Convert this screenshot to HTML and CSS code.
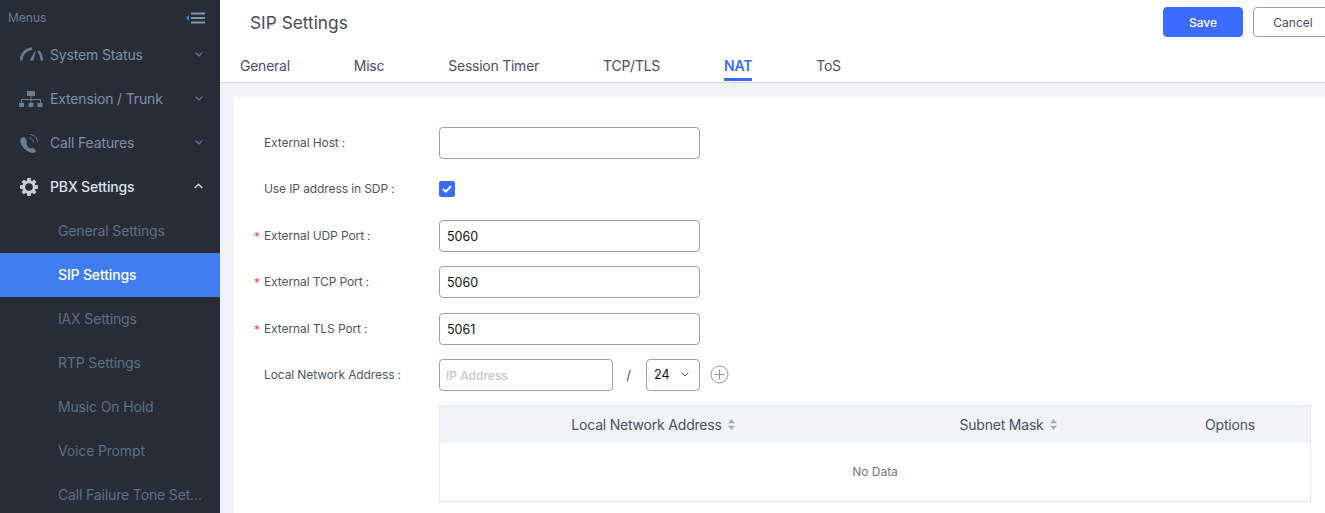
FILE: index.html
```html
<!DOCTYPE html>
<html lang="en">
<head>
<meta charset="utf-8">
<title>SIP Settings</title>
<link rel="stylesheet" href="styles.css">
</head>
<body>
<div class="app">
  <aside class="sidebar">
    <div class="menus-head">
      <span>Menus</span>
      <svg class="collapse" width="20" height="12" viewBox="0 0 20 12"><path d="M0 6l3-3v6z" fill="#3f7df0"/><path d="M5 1.500h14M5 6h14M5 10.500h14" stroke="#8593a8" stroke-width="2"/></svg>
    </div>
    <div class="nav-item">
      <svg class="nav-icon" width="24" height="16" viewBox="0 0 24 16" fill="none" stroke="#6b7b92"><path d="M2.200 13.500C2 8 6 2.500 13 1.500" stroke-width="2.600"/><path d="M19.500 4C21.500 6.500 22.800 9.500 22.800 13.500" stroke-width="2.600"/><path d="M10.500 13.500L17 2.500 14.500 13.500z" fill="#6b7b92" stroke="none"/></svg>
      <span class="nav-label">System Status</span>
      <svg class="chev" width="8" height="5" viewBox="0 0 8 5"><path d="M.7.7L4 4l3.300-3.300" fill="none" stroke="#6b7b92" stroke-width="1.100"/></svg>
    </div>
    <div class="nav-item">
      <svg class="nav-icon" width="24" height="17" viewBox="0 0 24 17" fill="#6b7b92"><path d="M8 0h8v5H8zM0 12h5v4H0zM9.500 12h5v4h-5zM18.500 12h5v4h-5z"/><path d="M12 5v7M2.500 12V8.500h19V12" fill="none" stroke="#6b7b92"/></svg>
      <span class="nav-label">Extension / Trunk</span>
      <svg class="chev" width="8" height="5" viewBox="0 0 8 5"><path d="M.7.7L4 4l3.300-3.300" fill="none" stroke="#6b7b92" stroke-width="1.100"/></svg>
    </div>
    <div class="nav-item">
      <svg class="nav-icon" width="24" height="21" viewBox="0 0 24 21" fill="none"><path d="M2 5.500C.5 7 1 10 3.500 13.500S10 19.500 13 20c2 .3 4-1 4-2.500l-3.500-3-2 1.200C10 15 8 13.200 7.500 11.500c-.4-1 0-2 .8-2.500L6 4.500C4.500 4 3 4.500 2 5.500z" fill="#6b7b92"/><path d="M10 5c2.500 0 4.500 2 4.500 4.500M11 1.500c4 0 7.500 3.500 7.500 7.500" stroke="#6b7b92" stroke-width="1"/></svg>
      <span class="nav-label">Call Features</span>
      <svg class="chev" width="8" height="5" viewBox="0 0 8 5"><path d="M.7.7L4 4l3.300-3.300" fill="none" stroke="#6b7b92" stroke-width="1.100"/></svg>
    </div>
    <div class="nav-item open">
      <svg class="nav-icon gear" width="24" height="18" viewBox="0 0 24 18"><circle cx="9" cy="9" r="5.300" fill="none" stroke="#c9ced6" stroke-width="3"/><path d="M7.300 0h3.400l.4 3H6.900zM7.300 18h3.400l.4-3H6.900zM0 7.300v3.400l3 .4V6.900zM18 7.300v3.400l-3 .4V6.900zM1.500 4L4 1.500l2.200 2.200-2.500 2.500zM16.500 14L14 16.500l-2.200-2.200 2.500-2.500zM14 1.500L16.500 4l-2.200 2.200-2.500-2.500zM4 16.500L1.500 14l2.200-2.200 2.500 2.500z" fill="#c9ced6"/></svg>
      <span class="nav-label">PBX Settings</span>
      <svg class="chev" width="9" height="6" viewBox="0 0 9 6"><path d="M.8 5L4.500 1.300 8.200 5" fill="none" stroke="#d5d9df" stroke-width="1.400"/></svg>
    </div>
    <div class="sub-item">General Settings</div>
    <div class="sub-item active">SIP Settings</div>
    <div class="sub-item">IAX Settings</div>
    <div class="sub-item">RTP Settings</div>
    <div class="sub-item">Music On Hold</div>
    <div class="sub-item">Voice Prompt</div>
    <div class="sub-item">Call Failure Tone Settings</div>
  </aside>
  <main class="main">
    <header class="header">
      <div class="title-row">
        <h1 class="title">SIP Settings</h1>
        <div class="actions">
          <button class="btn primary">Save</button>
          <button class="btn ghost">Cancel</button>
        </div>
      </div>
      <nav class="tabs">
        <span class="tab">General</span>
        <span class="tab">Misc</span>
        <span class="tab">Session Timer</span>
        <span class="tab">TCP/TLS</span>
        <span class="tab current">NAT</span>
        <span class="tab">ToS</span>
      </nav>
    </header>
    <section class="content">
      <div class="card">
        <div class="row">
          <label class="label">External Host<i>:</i></label>
          <div class="input"></div>
        </div>
        <div class="row">
          <label class="label">Use IP address in SDP<i>:</i></label>
          <span class="checkbox"><svg width="10" height="8" viewBox="0 0 10 8"><path d="M1 4l2.700 2.600L9 1.200" fill="none" stroke="#fff" stroke-width="2"/></svg></span>
        </div>
        <div class="row">
          <label class="label req">External UDP Port<i>:</i></label>
          <div class="input">5060</div>
        </div>
        <div class="row">
          <label class="label req">External TCP Port<i>:</i></label>
          <div class="input">5060</div>
        </div>
        <div class="row">
          <label class="label req">External TLS Port<i>:</i></label>
          <div class="input">5061</div>
        </div>
        <div class="row">
          <label class="label">Local Network Address<i>:</i></label>
          <div class="input ip">IP Address</div>
          <span class="slash">/</span>
          <div class="input mask">24<svg width="8" height="5" viewBox="0 0 8 5"><path d="M.7.7L4 4l3.300-3.300" fill="none" stroke="#555" stroke-width="1"/></svg></div>
          <svg class="plus" width="19" height="19" viewBox="0 0 19 19" fill="none" stroke="#8d97a6"><circle cx="9.500" cy="9.500" r="8.500"/><path d="M9.500 4.500v10M4.500 9.500h10"/></svg>
        </div>
        <div class="table">
          <div class="thead">
            <div class="th col-a">Local Network Address<svg class="sort" width="7" height="11" viewBox="0 0 7 11"><path d="M3.500 0L7 4.300H0zM3.500 11L0 6.700h7z" fill="#a9adb3"/></svg></div>
            <div class="th col-b">Subnet Mask<svg class="sort" width="7" height="11" viewBox="0 0 7 11"><path d="M3.500 0L7 4.300H0zM3.500 11L0 6.700h7z" fill="#a9adb3"/></svg></div>
            <div class="th col-c">Options</div>
          </div>
          <div class="empty">No Data</div>
        </div>
      </div>
    </section>
  </main>
</div>
</body>
</html>
```
FILE: styles.css
```css
* { box-sizing: border-box; }
html, body { margin: 0; height: 100%; overflow: hidden; }
body { font-family: Inter, "Liberation Sans", sans-serif; color: #4a5163; background: #fff; }
.app { display: flex; height: 513px; width: 1325px; overflow: hidden; }

.sidebar { width: 220px; flex: none; background: #282c37; overflow: hidden; }
.menus-head { height: 33px; padding: 2px 14px 0 8px; display: flex; align-items: center; justify-content: space-between; font-size: 12px; color: #6d7f99; }
.nav-item { height: 44px; display: flex; align-items: center; padding: 0 17px 0 19px; font-size: 14px; letter-spacing: -.15px; color: #7e8fa9; }
.nav-icon { flex: none; margin-right: 7px; }
.gear { margin-left: 1px; margin-right: 6px; }
.nav-label { flex: 1; padding-bottom: 2px; }
.chev { margin-bottom: 2px; }
.nav-item.open { color: #dde1e6; font-weight: 500; }
.sub-item { height: 44px; line-height: 44px; padding: 0 15px 0 58px; font-size: 14px; letter-spacing: -.15px; color: #5f6f80; white-space: nowrap; overflow: hidden; text-overflow: ellipsis; }
.sub-item.active { background: #3f7df0; color: #fff; font-weight: 500; }

.main { flex: 1; min-width: 0; display: flex; flex-direction: column; }
.header { height: 83px; flex: none; border-bottom: 1px solid #d5d8db; background: #fff; }
.title-row { height: 45px; display: flex; justify-content: space-between; padding: 7px 0 0 30px; width: 1113px; }
.title { margin: 0; font-size: 17.3px; line-height: 32px; font-weight: 400; color: #4a4d55; }
.actions { display: flex; gap: 10px; flex: none; }
.btn { width: 80px; height: 30px; border-radius: 4px; font: 12px Inter, "Liberation Sans", sans-serif; padding: 0; }
.primary { background: #3b6cff; border: 1px solid #3b6cff; color: #fff; font-weight: 500; }
.ghost { background: #fff; border: 1px solid #9aa1ae; color: #4a5163; }
.tabs { display: flex; gap: 64px; padding-left: 20px; height: 37px; }
.tab { font-size: 14px; letter-spacing: -.25px; line-height: 42px; height: 36px; color: #4a5163; }
.tab.current { color: #3b6cff; font-weight: 600; border-bottom: 3px solid #3b6cff; }

.content { flex: 1; min-height: 0; background: #f0f4f7; padding: 14px 0 0 14px; }
.card { background: #fff; height: 100%; padding: 30px 14px 0 0; }
.row { height: 32px; margin-bottom: 14.4px; display: flex; align-items: center; }
.label { width: 205px; flex: none; padding: 0 0 1px 30px; font-size: 12px; color: #4f5561; position: relative; letter-spacing: -.1px; }
.label i { font-style: normal; margin-left: 3px; }
.req::before { content: "*"; color: #f5484d; position: absolute; left: 20px; top: 1px; font-size: 12px; }
.input { width: 261px; height: 32px; border: 1px solid #9aa1ae; border-radius: 4px; padding: 1px 6px 0 7px; font-size: 12.500px; line-height: 30px; color: #111; background: #fff; }
.checkbox { width: 16px; height: 16px; border-radius: 2px; background: #3b6cff; display: flex; align-items: center; justify-content: center; }
.ip { width: 174px; font-size: 12px; font-weight: 500; color: #c4c7cb; padding-left: 6px; }
.slash { width: 33px; padding-right: 2px; text-align: center; font-size: 13px; color: #4f5561; }
.mask { width: 54px; display: flex; align-items: center; justify-content: space-between; padding: 0 10px 0 7px; }
.plus { margin-left: 10px; }

.table { margin-left: 205px; width: 872px; border: 1px solid #e4e6ee; }
.thead { display: flex; height: 37px; background: #f0f4f7; font-size: 14px; letter-spacing: -.2px; color: #4a5163; }
.th { display: flex; align-items: center; justify-content: center; }
.sort { margin-left: 6px; }
.col-a { width: 426px; }
.col-b { width: 284px; }
.col-c { flex: 1; }
.empty { height: 58px; line-height: 58px; text-align: center; font-size: 12px; color: #6f7682; }
```
